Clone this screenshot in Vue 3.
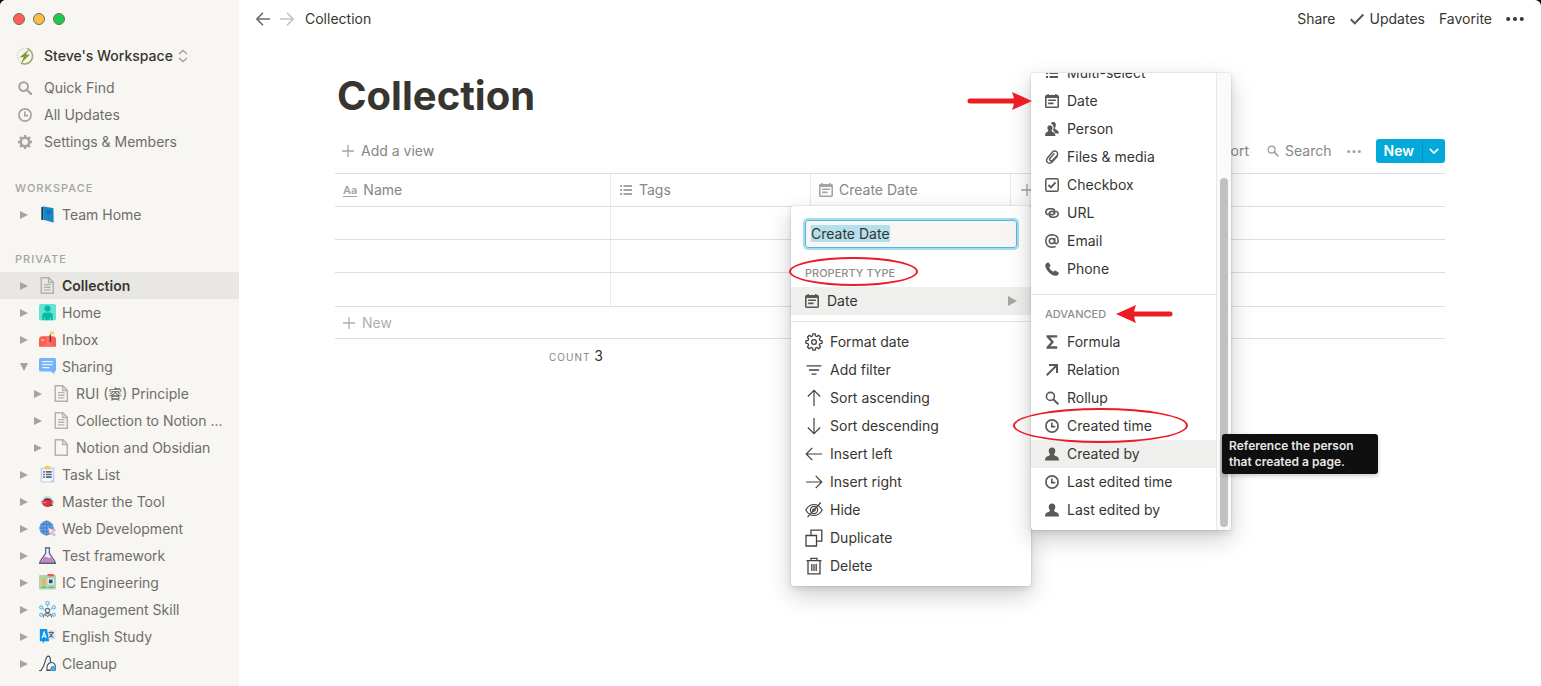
<script setup>
import { onMounted, ref } from 'vue'

const page = '<path d="M2.5.8h6.8l4.2 4.3v10.1h-11z" fill="none" stroke="#b3b2ae" stroke-width="1.4"/><path d="M9.2 1v4.3h4.2" fill="none" stroke="#b3b2ae" stroke-width="1.3"/>'

const icons = {
  zap: ['0 0 18 18', '<path d="M11 1.400a8 8 0 0 1-2 15.600 8 8 0 0 1-4-1" fill="none" stroke="#8fa653" stroke-width="1.500"/><circle cx="9" cy="9" r="7.600" fill="none" stroke="#b9c69c" stroke-width="1.300" stroke-dasharray=".8 1.600"/><path d="M13.500 2 3.600 10.200h4.200L5 16.500l9-8.900H9.900z" fill="#7f9b3c"/>'],
  updown: ['0 0 10 14', '<path d="m1 5 4-3.6L9 5M1 9l4 3.6L9 9" fill="none" stroke="#a5a4a0" stroke-width="1.5"/>'],
  find: ['0 0 14 14', '<circle cx="5.6" cy="5.6" r="4.4" fill="none" stroke="currentColor" stroke-width="2"/><path d="m8.800 8.800 4.300 4.300" stroke="currentColor" stroke-width="2.300" stroke-linecap="round"/>'],
  search: ['0 0 14 14', '<circle cx="5.4" cy="5.4" r="4" fill="none" stroke="currentColor" stroke-width="1.6"/><path d="m8.4 8.4 4.4 4.4" stroke="currentColor" stroke-width="2" stroke-linecap="round"/>'],
  clock: ['0 0 14 14', '<circle cx="7" cy="7" r="6.1" fill="none" stroke="currentColor" stroke-width="1.7"/><path d="M6.800 3.500v4.100h3.400" fill="none" stroke="currentColor" stroke-width="1.600"/>'],
  gear: ['0 0 14 14', '<circle cx="7" cy="7" r="4.200" fill="none" stroke="currentColor" stroke-width="2.600"/><g stroke="currentColor" stroke-width="2.400"><path d="M7 0v2.500M7 11.500V14M0 7h2.500M11.500 7H14M2 2l1.800 1.800M10.200 10.200 12 12M12 2l-1.800 1.800M3.800 10.200 2 12"/></g>'],
  book: ['0 0 16 18', '<path d="M1.5 1.2 4 .4v13.8L1.5 15z" fill="#16324d"/><path d="M3.6.6 14 2.2 15.2 16.8l-1.6 1L3.6 14.4z" fill="#a9c6d6"/><path d="M3.6.6 14.2 2.3v15L3.6 14.5z" fill="#1687c9"/><path d="M6.5 5.2 12 6M7 7.4l4 .7" stroke="#0c5f96" stroke-width="1"/>'],
  doc: ['0.7 0.2 15 15.6', page + '<path d="M5 7.2h6M5 9.6h6M5 12h6" stroke="#b3b2ae" stroke-width="1.2"/>'],
  blank: ['0.7 0.2 15 15.6', page],
  home: ['0 0 16 16', '<rect width="16" height="15.4" rx="1.6" fill="#62e5d0"/><circle cx="8" cy="4.3" r="2.9" fill="#06b9a3"/><path d="M3 15.4v-4.2c0-2 1.2-3.2 3-3.2h4c1.800 0 3 1.200 3 3.200v4.200h-2v-3h-.8v3H5.800v-3H5v3z" fill="#06b9a3"/>'],
  inbox: ['0 0 16 16', '<path d="M0 8.200Q0 5 3 5h10q3 0 3 3.200v6.600H0z" fill="#ff5b50"/><path d="M7 14.800V8q0-3-3-3h7v9.800z" fill="#f97468"/><path d="M2 8.500h3" stroke="#ffd0cb" stroke-width="1.200"/><path d="M10 .4h5l-1 1.500 1 1.500h-3.500v1.200H10z" fill="#ffd166"/><path d="M10.600 3.500v6.800" stroke="#5b3b55" stroke-width="1.300"/>'],
  chat: ['0 0 16 16', '<path d="M1.500 0h13Q16 0 16 1.500v9.700q0 1.500-1.500 1.500V15l-3.700-2.300H1.500Q0 12.700 0 11.200V1.500Q0 0 1.500 0z" fill="#74b3fb"/><path d="M3 3.500h10M3 6.300h10M3 9.100h7" stroke="#e4f0ff" stroke-width="1.200"/>'],
  tasks: ['0 0 16 16', '<rect x="1.500" y="1.500" width="13" height="14" rx="1" fill="#bcd3ea"/><path d="M3 3h10v9l-2.500 2.500H3z" fill="#f5faff"/><rect x="5.500" width="5" height="3" rx="1" fill="#ffc843"/><path d="M4 5.500h1.500M6.500 5.500h5.500M4 8h1.500M6.500 8h5.500M4 10.500h1.500M6.500 10.500h5.500" stroke="#56647e" stroke-width="1.500"/>'],
  tool: ['0 0 16 16', '<path d="M4 4.500Q8 .5 12 4.500L15 9l-2 2.500H3L1 9z" fill="#b8e6df"/><path d="M2.500 8Q8 3 13 7.500l-1 4.500q-4 2.500-8-.3z" fill="#dc3345"/><path d="M5 6.500q3-2 6 0" stroke="#7d1c2b" stroke-width="1.300" fill="none"/><path d="M9.500 10.500 13 12" stroke="#552" stroke-width="1.200"/><path d="M4 9h3" stroke="#f28c94" stroke-width="1"/>'],
  globe: ['0 0 18 18', '<circle cx="8" cy="8.500" r="7.700" fill="#5fa3e2"/><path d="M8 .8v15.400M.4 8.500h15.200M1.600 4.700h12.800M1.600 12.300h12.800" stroke="#4772b5" stroke-width=".7"/><ellipse cx="8" cy="8.500" rx="3.800" ry="7.600" fill="none" stroke="#4772b5" stroke-width=".7"/><path d="m9.500 8 8 3-3 1.200 2.700 3.500-1.600 1.200-2.600-3.500-1.800 2.400z" fill="#f2e2ec" stroke="#ba86a0" stroke-width=".7"/>'],
  flask: ['0 0 16 16', '<path d="M5.500.8h5M6.300 1v5L1 13.500v1.700h14v-1.700L9.700 6V1" fill="#eef1f6" stroke="#515a74" stroke-width="1.100"/><path d="M4.300 9.700q2-1 3.700 0t3.700 0l2.700 4.800H1.600z" fill="#c384c8"/><path d="M0 15.300h16" stroke="#515a74" stroke-width="1.300"/>'],
  chip: ['0 0 16 16', '<rect y="1" width="16" height="13.500" rx="1" fill="#a9d8ae"/><rect x="2" y="3.500" width="5" height="7.500" fill="#e0c67e"/><path d="M3.700 3.500V11M5.300 3.500V11" stroke="#cda754" stroke-width=".6"/><rect x="8" width="6" height="2.200" fill="#ee5b50"/><rect x="8" y="4" width="6" height="6" fill="#dce8f2"/><rect x="9.400" y="5.300" width="3.300" height="3.300" fill="#344360"/><path d="M2 12.600h5M9 12.600h5" stroke="#70ad7c"/>'],
  team: ['0 0 16 16', '<g fill="none" stroke="#62bff3" stroke-width="1.100"><circle cx="8" cy="2" r="1.500"/><circle cx="2" cy="6" r="1.400"/><circle cx="14" cy="6" r="1.400"/><circle cx="2" cy="13" r="1.400"/><circle cx="14" cy="13" r="1.400"/><path d="M8 3.500v2M3.300 6.800 5 8M12.700 6.800 11 8M3.500 13h1M11.500 13h1"/></g><circle cx="8" cy="9" r="2" fill="none" stroke="#666b75" stroke-width="1.100"/><path d="M4 15.500q.5-3.700 4-3.700t4 3.700M6 13l2 1.500 2-1.500" fill="none" stroke="#666b75" stroke-width="1"/>'],
  lang: ['0 0 16 16', '<path d="M7 2h8v9H7z" fill="#dbe5ec"/><path d="M.8 1h6.700l2 11.500H5L3.500 15v-2.500H.8z" fill="#0b95ee"/><path d="M3 9.500 4.800 4l1.900 5.500M3.500 7.800h2.800" fill="none" stroke="#fff" stroke-width="1.100"/><path d="M9 4.300h5M11.500 3v1.300M13 4.500q-1 3-3.500 4.500M10 5.500q1.500 2.500 3.500 3.500" fill="none" stroke="#506579" stroke-width="1"/>'],
  broom: ['0 0 18 18', '<path d="M2 16.500Q5.500 12 6.800 6 8 1 10 1.200t2 4Q12 8 13 10" fill="none" stroke="#454b57" stroke-width="1.200"/><path d="M8.500 16q-1-6.500 4-8 3.500-.3 4.700 2.800V16z" fill="#fbfcfc" stroke="#454b57" stroke-width="1.100"/><circle cx="14.700" cy="14" r="2.700" fill="#48a7df"/><path d="M0 16.500h3M8 16.300h4" stroke="#454b57"/>'],
  back: ['0 0 14 14', '<path d="M7 .8.900 7 7 13.200M1 7h13" fill="none" stroke="currentColor" stroke-width="1.600"/>'],
  forward: ['0 0 14 14', '<path d="M7 .8 13.100 7 7 13.200M13 7H0" fill="none" stroke="currentColor" stroke-width="1.600"/>'],
  check: ['0 0 14 14', '<path d="m.8 7.200 4 4.200L13.300 2.500" fill="none" stroke="currentColor" stroke-width="2"/>'],
  dots: ['0 0 18 6', '<circle cx="2.200" cy="3" r="2" fill="currentColor"/><circle cx="9" cy="3" r="2" fill="currentColor"/><circle cx="15.800" cy="3" r="2" fill="currentColor"/>'],
  plus: ['0 0 12 12', '<path d="M6 0v12M0 6h12" stroke="currentColor" stroke-width="1.300"/>'],
  chevron: ['0 0 10 10', '<path d="m1.500 3.200 3.500 3.500 3.500-3.500" fill="none" stroke="currentColor" stroke-width="1.300"/>'],
  list: ['0 0 14 14', '<path d="M1 3h2M1 7h2M1 11h2M4.500 3H13M4.500 7H13M4.500 11H13" stroke="currentColor" stroke-width="1.800"/>'],
  date: ['0 0 14 14', '<path fill="currentColor" fill-rule="evenodd" d="M10.900 5.500H3.100v1.500h7.800zM12.440 1.060h-.77V0H10.100v1.060H3.890V0H2.330v1.060h-.77C.7 1.060 0 1.760 0 2.600v9.900C0 13.360.7 14 1.560 14h10.880c.86 0 1.560-.64 1.560-1.500V2.600c0-.85-.7-1.550-1.560-1.550zm0 11.440H1.560V3.940h10.880zM8.560 8.600H3.100v1.560h5.460z"/>'],
  people: ['0 0 14 14', '<path d="M6.200.8Q7.200-.3 9 .1q2 .5 1.900 2.900-.1 1.800-1.100 3 .3 1.400 2 2 2 .8 2.200 3.500h-3.700Q9.500 9 7.900 8.300 8.900 6.500 8.500 4.600 8 2.300 6.200 1.800z" fill="currentColor"/><path d="M4.800 3.300Q7.500 3.300 7.500 6q0 1.600-1 2.600.2 1.200 2 1.600 1.800.6 2 3.800H0q0-3.200 1.500-3.800 1.700-.5 1.900-1.600-1-1-1-2.600 0-2.700 2.400-2.700z" fill="currentColor"/>'],
  person: ['0 0 14 14', '<path d="M7 .4q3.300 0 3.300 3.500 0 2-1.300 3.400.1 1.300 2.200 1.900Q14 10 14 13.500H0Q0 10 2.800 9.200q2.100-.6 2.200-1.900Q3.700 5.900 3.700 3.900 3.700.4 7 .4z" fill="currentColor"/>'],
  clip: ['0 0 14 14', '<path d="M12.300 6.200 7.500 11.700Q5 14.200 2.700 12.500.5 10.500 2.300 8.200l4.900-6Q9.200.100 11.600 1.700q2 1.800.3 4L7.700 10.300q-1.200 1.300-2.500.3-1.200-1.100-.1-2.400l3.800-4.500" fill="none" stroke="currentColor" stroke-width="1.400" stroke-linecap="round"/>'],
  checkbox: ['0 0 14 14', '<rect x=".8" y=".8" width="12.400" height="12.400" rx="1.500" fill="none" stroke="currentColor" stroke-width="1.500"/><path d="m3.500 7 2.400 2.400L10.600 4.400" fill="none" stroke="currentColor" stroke-width="1.800"/>'],
  url: ['0 0 14 14', '<g fill="none" stroke="currentColor" stroke-width="1.600"><path d="M3.200 8.700Q.6 8.300.8 5.800 1.300 3 4.300 2.800h2.400Q9.700 3 10 5.800q-.1 2.700-3.100 3-2.300 0-2.400-1.700"/><path d="M10.800 5.300q2.600.4 2.400 2.900-.5 2.800-3.500 3H7.300Q4.300 11 4 8.200q.1-2.700 3.100-3 2.300 0 2.400 1.700"/></g>'],
  at: ['0 0 14 14', '<circle cx="6.900" cy="7" r="2.600" fill="none" stroke="currentColor" stroke-width="1.500"/><path d="M9.700 4v4.200q.1 1.500 1.500 1.500 2-.2 2-3.200Q12.800.8 7 .8.800 1.100.8 7q.3 6 6.200 6.200 2 0 3.700-.9" fill="none" stroke="currentColor" stroke-width="1.500"/>'],
  phone: ['0 0 14 14', '<path d="M2.600.4q.7-.4 1.200.3l1.500 2.400q.4.7-.2 1.300l-1 .9q.6 2.400 4.200 4.400l1.300-.9q.7-.5 1.300 0l2.500 1.800q.7.600.2 1.300-1.200 2.200-3.600 1.800Q6 13.100 2.500 8.700-.3 4.700.4 2.500 1 1.100 2.600.4z" fill="currentColor"/>'],
  sigma: ['0 0 14 14', '<path d="M1.500.3h10.700v2.300H5.200L9 7l-3.800 4.300h7v2.400H1.500v-1.800L6 7 1.500 2.100z" fill="currentColor"/>'],
  relation: ['0 0 14 14', '<path d="M4 1h9v9h-2V4.400L2.400 13 1 11.600 9.600 3H4z" fill="currentColor"/>'],
  format: ['0 0 18 18', '<g fill="none" stroke="currentColor" stroke-width="1.300"><path stroke-linejoin="round" d="M7.800.9h2.400l.3 2.100 1.500.6 1.700-1.300 1.900 1.900-1.200 1.700.6 1.500 2.100.4v2.400l-2.100.4-.6 1.500 1.200 1.700-1.900 1.900-1.700-1.300-1.500.6-.3 2.100H7.800L7.500 15l-1.500-.6-1.700 1.300-1.900-1.900 1.200-1.700-.6-1.500-2.100-.4V7.800L3 7.400l.6-1.500-1.200-1.700 1.900-1.900L6 3.600 7.500 3z"/><circle cx="9" cy="9" r="2.400"/></g>'],
  filter: ['0 0 18 18', '<path d="M1.500 4.800h15M4 9h10M6.500 13.200h5" stroke="currentColor" stroke-width="1.300"/>'],
  up: ['0 0 18 18', '<path d="M9 17V1.500M2.800 7.500 9 1.300l6.200 6.200" fill="none" stroke="currentColor" stroke-width="1.200"/>'],
  down: ['0 0 18 18', '<path d="M9 1v15.500M2.800 10.500 9 16.700l6.200-6.200" fill="none" stroke="currentColor" stroke-width="1.200"/>'],
  left: ['0 0 18 18', '<path d="M17 9H1.500M7.300 2.800 1.200 9l6.100 6.200" fill="none" stroke="currentColor" stroke-width="1.200"/>'],
  right: ['0 0 18 18', '<path d="M1 9h15.500M10.700 2.800 16.800 9l-6.100 6.200" fill="none" stroke="currentColor" stroke-width="1.200"/>'],
  hide: ['0 0 18 18', '<g fill="none" stroke="currentColor" stroke-width="1.200"><path d="M.8 9Q4 3.500 9 3.500T17.200 9Q14 14.500 9 14.500T.8 9z"/><circle cx="9" cy="9" r="3.600"/><circle cx="9" cy="9" r="1.200"/><path d="M2.500 16.200 15.800 1.500"/></g>'],
  duplicate: ['0 0 18 18', '<path d="M1 6.500h10.500V17H1zM6 6.500V1.200h10.800v11h-5" fill="none" stroke="currentColor" stroke-width="1.300"/>'],
  trash: ['0 0 18 18', '<path d="M1.500 3.700h15M6 3.500V1.300h6v2.200M3 4v12.800h12V4M6.800 7v7M9 7v7M11.200 7v7" fill="none" stroke="currentColor" stroke-width="1.300"/>'],
}

const nav = [
  { icon: 'find', label: 'Quick Find' },
  { icon: 'clock', label: 'All Updates' },
  { icon: 'gear', label: 'Settings & Members' },
]

const sections = [
  { name: 'Workspace', pages: [{ icon: 'book', label: 'Team Home' }] },
  {
    name: 'Private',
    pages: [
      { icon: 'doc', label: 'Collection', active: true },
      { icon: 'home', label: 'Home' },
      { icon: 'inbox', label: 'Inbox' },
      { icon: 'chat', label: 'Sharing', open: true },
      { icon: 'doc', label: 'RUI (睿) Principle', child: true },
      { icon: 'doc', label: 'Collection to Notion ...', child: true },
      { icon: 'blank', label: 'Notion and Obsidian', child: true },
      { icon: 'tasks', label: 'Task List' },
      { icon: 'tool', label: 'Master the Tool' },
      { icon: 'globe', label: 'Web Development' },
      { icon: 'flask', label: 'Test framework' },
      { icon: 'chip', label: 'IC Engineering' },
      { icon: 'team', label: 'Management Skill' },
      { icon: 'lang', label: 'English Study' },
      { icon: 'broom', label: 'Cleanup' },
    ],
  },
]

const actions = [
  { icon: 'format', label: 'Format date' },
  { icon: 'filter', label: 'Add filter' },
  { icon: 'up', label: 'Sort ascending' },
  { icon: 'down', label: 'Sort descending' },
  { icon: 'left', label: 'Insert left' },
  { icon: 'right', label: 'Insert right' },
  { icon: 'hide', label: 'Hide' },
  { icon: 'duplicate', label: 'Duplicate' },
  { icon: 'trash', label: 'Delete' },
]

const basicTypes = [
  { icon: 'list', label: 'Multi-select' },
  { icon: 'date', label: 'Date' },
  { icon: 'people', label: 'Person' },
  { icon: 'clip', label: 'Files & media' },
  { icon: 'checkbox', label: 'Checkbox' },
  { icon: 'url', label: 'URL' },
  { icon: 'at', label: 'Email' },
  { icon: 'phone', label: 'Phone' },
]

const advancedTypes = [
  { icon: 'sigma', label: 'Formula' },
  { icon: 'relation', label: 'Relation' },
  { icon: 'search', label: 'Rollup' },
  { icon: 'clock', label: 'Created time' },
  { icon: 'person', label: 'Created by', active: true },
  { icon: 'clock', label: 'Last edited time' },
  { icon: 'person', label: 'Last edited by' },
]

const propertyName = ref('Create Date')
const nameInput = ref(null)

onMounted(() => {
  nameInput.value.focus({ preventScroll: true })
  nameInput.value.select()
})
</script>

<template>
  <div class="window">
    <aside class="sidebar">
      <div class="lights"><i class="red"></i><i class="amber"></i><i class="green"></i></div>
      <button class="workspace">
        <svg class="s18" :viewBox="icons.zap[0]" v-html="icons.zap[1]"></svg>
        <span>Steve's Workspace</span>
        <svg class="updown" :viewBox="icons.updown[0]" v-html="icons.updown[1]"></svg>
      </button>
      <nav>
        <a v-for="n in nav" :key="n.label" class="nav-row" href="#">
          <span class="nav-icon"><svg class="s14" :viewBox="icons[n.icon][0]" v-html="icons[n.icon][1]"></svg></span>
          {{ n.label }}
        </a>
      </nav>
      <section v-for="s in sections" :key="s.name" class="group">
        <h2 class="caps">{{ s.name }}</h2>
        <a v-for="p in s.pages" :key="p.label" class="tree-row" :class="{ active: p.active, child: p.child }" href="#">
          <span class="caret" :class="{ open: p.open }"></span>
          <span class="page-icon"><svg :viewBox="icons[p.icon][0]" v-html="icons[p.icon][1]"></svg></span>
          <span>{{ p.label }}</span>
        </a>
      </section>
    </aside>

    <main class="main">
      <header class="topbar">
        <button class="nav-arrow" aria-label="Back"><svg class="s14" :viewBox="icons.back[0]" v-html="icons.back[1]"></svg></button>
        <button class="nav-arrow dim" aria-label="Forward"><svg class="s14" :viewBox="icons.forward[0]" v-html="icons.forward[1]"></svg></button>
        <a class="crumb" href="#">Collection</a>
        <div class="top-actions">
          <button>Share</button>
          <button class="updates"><svg class="s14" :viewBox="icons.check[0]" v-html="icons.check[1]"></svg>Updates</button>
          <button>Favorite</button>
          <button aria-label="More"><svg class="dots" :viewBox="icons.dots[0]" v-html="icons.dots[1]"></svg></button>
        </div>
      </header>

      <div class="content">
        <h1>Collection</h1>
        <div class="toolbar">
          <button class="add-view"><svg class="s12" :viewBox="icons.plus[0]" v-html="icons.plus[1]"></svg>Add a view</button>
          <div class="tools">
            <button>Sort</button>
            <button class="search"><svg class="s12" :viewBox="icons.search[0]" v-html="icons.search[1]"></svg>Search</button>
            <button class="more" aria-label="View options"><svg class="dots-small" :viewBox="icons.dots[0]" v-html="icons.dots[1]"></svg></button>
            <div class="new">
              <button class="new-main">New</button>
              <button class="new-more" aria-label="New options"><svg class="s12" :viewBox="icons.chevron[0]" v-html="icons.chevron[1]"></svg></button>
            </div>
          </div>
        </div>

        <table>
          <colgroup><col class="c-name"><col class="c-prop"><col class="c-prop"><col></colgroup>
          <thead>
            <tr>
              <th><div class="th"><span class="aa">Aa</span>Name</div></th>
              <th><div class="th"><svg class="s14" :viewBox="icons.list[0]" v-html="icons.list[1]"></svg>Tags</div></th>
              <th><div class="th"><svg class="s14" :viewBox="icons.date[0]" v-html="icons.date[1]"></svg>Create Date</div></th>
              <th><button class="add-col" aria-label="Add property"><svg class="s12" :viewBox="icons.plus[0]" v-html="icons.plus[1]"></svg></button></th>
            </tr>
          </thead>
          <tbody>
            <tr v-for="r in 3" :key="r"><td></td><td></td><td></td><td></td></tr>
          </tbody>
          <tfoot>
            <tr class="new-row"><td colspan="4"><button><svg class="s12" :viewBox="icons.plus[0]" v-html="icons.plus[1]"></svg>New</button></td></tr>
            <tr class="count-row"><td><span class="count">Count</span> 3</td><td colspan="3"></td></tr>
          </tfoot>
        </table>
      </div>
    </main>

    <div class="menu" role="menu">
      <div class="name-field"><input ref="nameInput" v-model="propertyName" type="text" aria-label="Property name"></div>
      <div class="menu-label">Property type</div>
      <button class="item type active">
        <svg class="s14" :viewBox="icons.date[0]" v-html="icons.date[1]"></svg>Date
        <span class="caret end"></span>
      </button>
      <hr>
      <button v-for="a in actions" :key="a.label" class="item">
        <svg class="s18" :viewBox="icons[a.icon][0]" v-html="icons[a.icon][1]"></svg>{{ a.label }}
      </button>
    </div>

    <div class="submenu" role="menu">
      <div class="types">
        <button v-for="t in basicTypes" :key="t.label" class="item type">
          <svg class="s14" :viewBox="icons[t.icon][0]" v-html="icons[t.icon][1]"></svg>{{ t.label }}
        </button>
        <hr>
        <div class="menu-label">Advanced</div>
        <button v-for="t in advancedTypes" :key="t.label" class="item type" :class="{ active: t.active }">
          <svg class="s14" :viewBox="icons[t.icon][0]" v-html="icons[t.icon][1]"></svg>{{ t.label }}
        </button>
      </div>
      <div class="track"><div class="thumb"></div></div>
    </div>

    <div class="tooltip" role="tooltip">Reference the person<br>that created a page.</div>

    <div class="ring ring-type"></div>
    <div class="ring ring-time"></div>
    <svg class="arrow arrow-date" viewBox="0 0 66 20"><path d="M3 10h46" stroke="#ed1c24" stroke-width="5" stroke-linecap="round" /><path d="M65 10 45 1q4 9 0 18z" fill="#ed1c24" /></svg>
    <svg class="arrow arrow-advanced" viewBox="0 0 58 20"><path d="M17 10h37" stroke="#ed1c24" stroke-width="5" stroke-linecap="round" /><path d="M0 10 20 1q-4 9 0 18z" fill="#ed1c24" /></svg>
  </div>
</template>

<style>
html { background: #000; }
body { margin: 0; }
</style>

<style scoped>
* { box-sizing: border-box; }
.window {
  position: relative;
  display: flex;
  min-height: 100vh;
  overflow: hidden;
  border-radius: 6px 6px 0 0;
  background: #fff;
  color: #37352f;
  font: 14px/20px Inter, "Noto Sans CJK SC", sans-serif;
}
button { margin: 0; padding: 0; border: 0; background: none; color: inherit; font: inherit; display: flex; align-items: center; }
a { color: inherit; text-decoration: none; }
svg { display: block; flex: none; }
.s12 { width: 12px; height: 12px; }
.s14 { width: 14px; height: 14px; }
.s18 { width: 18px; height: 18px; }

.sidebar { width: 239px; flex: none; background: #f7f6f3; color: #6f6d69; }
.lights { display: flex; gap: 8px; padding: 13px 13px 0; }
.lights i { width: 12px; height: 12px; border-radius: 50%; border: 1px solid; }
.red { background: #ff5f57; border-color: #f0524a; }
.amber { background: #ffbd44; border-color: #eeac39; }
.green { background: #1ec94c; border-color: #16b741; }
.workspace { height: 30px; margin: 16px 0 3px 16px; color: #37352f; font-weight: 500; gap: 10px; }
.updown { width: 10px; height: 14px; margin-left: -5px; }
.nav-row { display: flex; align-items: center; height: 27px; padding-left: 16px; gap: 10px; }
.nav-icon { width: 18px; display: flex; justify-content: center; color: #a5a4a0; }
.caps { margin: 0; padding-left: 15px; font-size: 11px; line-height: 25px; font-weight: 500; letter-spacing: 1px; text-transform: uppercase; color: #a5a4a0; }
.group { margin-top: 21px; }
.group + .group { margin-top: 19px; }
.tree-row { display: flex; align-items: center; height: 27px; padding-left: 16px; gap: 4px; white-space: nowrap; }
.tree-row.child { padding-left: 30px; }
.tree-row.active { background: #e8e7e4; color: #37352f; font-weight: 600; }
.caret { width: 16px; display: flex; justify-content: center; }
.caret::before { content: ""; border-left: 8px solid #a5a4a0; border-top: 4px solid transparent; border-bottom: 4px solid transparent; }
.caret.open::before { border: 4px solid transparent; border-bottom: 0; border-top: 8px solid #a5a4a0; }
.page-icon { width: 22px; display: flex; justify-content: center; }
.page-icon svg { width: 17px; height: 17px; }

.main { flex: 1; min-width: 0; }
.topbar { display: flex; align-items: center; height: 38px; padding: 0 17px; }
.nav-arrow { margin-right: 10px; color: #6b6965; }
.nav-arrow.dim { color: #c3c2c0; margin-right: 11px; }
.top-actions { display: flex; align-items: center; gap: 14px; margin-left: auto; }
.updates { gap: 6px; }
.updates svg { color: #55534e; }
.dots { width: 18px; height: 6px; }
.content { padding: 34px 96px 0; }
h1 { margin: 0; padding-left: 2px; font-size: 40px; line-height: 48px; font-weight: 700; }
.toolbar { display: flex; align-items: center; justify-content: space-between; height: 53px; padding: 9px 0 0 7px; color: #878682; }
.toolbar svg { color: #a5a4a0; }
.add-view { gap: 7px; }
.tools { display: flex; align-items: center; }
.search { gap: 6px; margin: 0 15px 0 18px; }
.dots-small { width: 14px; height: 5px; }
.new { display: flex; margin-left: 15px; border-radius: 3px; overflow: hidden; background: #02aad9; color: #fff; }
.new button { height: 24px; }
.new .new-main { padding: 0 8px; font-weight: 600; border-right: 1px solid #0b94bd; }
.new .new-more { padding: 0 5px; }
.new svg { color: #fff; }

table { width: 100%; table-layout: fixed; border-spacing: 0; border-top: 1px solid #dededd; }
.c-name { width: 276px; }
.c-prop { width: 200px; }
th, td { height: 33px; padding: 0; border-bottom: 1px solid #dededd; }
th:not(:last-child), tbody td:not(:nth-child(n+3)) { border-right: 1px solid #e9e9e8; }
tbody tr:last-child td { height: 34px; }
.th { display: flex; align-items: center; gap: 6px; padding-left: 8px; color: #878682; font-weight: 400; }
.th svg, .add-col { color: #a5a4a0; }
.aa { font-size: 11px; line-height: 12px; font-weight: 600; color: #a5a4a0; border-bottom: 1px solid #a5a4a0; }
.add-col { padding-left: 10px; }
.new-row td { height: 32px; }
.new-row button { gap: 7px; padding-left: 8px; color: #b0afac; }
.count-row td { height: 34px; padding-right: 8px; border: 0; text-align: right; }
.count { font-size: 10px; letter-spacing: 1px; text-transform: uppercase; color: #878682; }

.menu, .submenu {
  position: absolute;
  border-radius: 3px;
  background: #fff;
  box-shadow: 0 0 0 1px rgba(15, 15, 15, .05), 0 3px 6px rgba(15, 15, 15, .1), 0 9px 24px rgba(15, 15, 15, .2);
}
.menu { left: 791px; top: 206px; width: 240px; padding: 14px 0 6px; }
.name-field { padding: 0 14px; }
.name-field input {
  display: block;
  width: 100%;
  height: 28px;
  padding: 0 5px 2px;
  border: 1px solid #52b9dd;
  border-radius: 3px;
  outline: 2px solid #a5dbee;
  background: #f7f6f4;
  color: #37352f;
  font: inherit;
}
.name-field input::selection { background: #b4dfec; color: #37352f; }
.menu-label { padding: 0 14px; font-size: 11px; line-height: 28px; font-weight: 500; text-transform: uppercase; color: #8f8d89; }
.menu .menu-label { padding-top: 11px; }
.item { width: 100%; height: 28px; padding: 0 14px; gap: 7px; white-space: nowrap; }
.item svg { color: #45433e; }
.item.type { gap: 8px; }
.item.type svg { color: #5b5955; }
.item.active { background: #efefee; }
.caret.end { margin-left: auto; justify-content: flex-end; }
.caret.end::before { border-left-width: 9px; border-top-width: 5px; border-bottom-width: 5px; }
hr { width: 100%; margin: 6px 0; border: 0; border-top: 1px solid #e6e6e5; }
.submenu { left: 1031px; top: 73px; width: 200px; height: 457px; display: flex; overflow: hidden; }
.types { flex: 1; display: flex; flex-direction: column; justify-content: flex-end; padding-bottom: 6px; }
.types > * { flex: none; }
.types hr { margin: 11px 0 5px; }
.track { width: 15px; border-left: 1px solid #e8e8e8; background: #fafafa; display: flex; justify-content: center; align-items: flex-end; padding-bottom: 3px; }
.thumb { width: 8px; height: 349px; border-radius: 4px; background: #c1c1c1; }
.tooltip { position: absolute; left: 1222px; top: 434px; width: 156px; padding: 4px 7px; border-radius: 3px; background: #0f0f0f; color: #e7e7e6; font-size: 12px; line-height: 16px; font-weight: 600; white-space: nowrap; box-shadow: 0 2px 4px rgba(15, 15, 15, .2); }
.ring { position: absolute; border: 2px solid #ec1c26; border-radius: 50%; pointer-events: none; }
.ring-type { left: 789px; top: 257px; width: 129px; height: 29px; }
.ring-time { left: 1013px; top: 408px; width: 175px; height: 35px; }
.arrow { position: absolute; height: 20px; pointer-events: none; }
.arrow-date { left: 967px; top: 91px; width: 66px; }
.arrow-advanced { left: 1116px; top: 304px; width: 58px; }
</style>
